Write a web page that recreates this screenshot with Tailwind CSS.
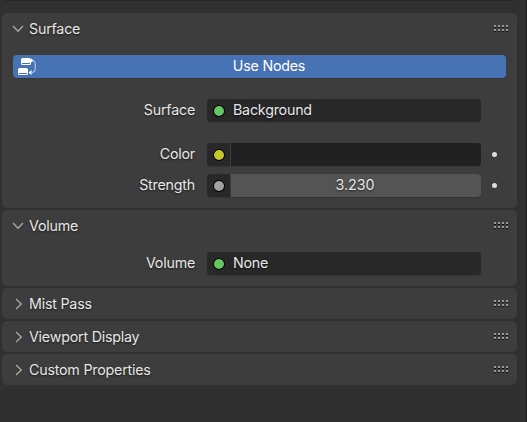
<!DOCTYPE html>
<html lang="en">
<head>
<meta charset="utf-8">
<title>World Properties</title>
<script src="https://cdn.jsdelivr.net/npm/@tailwindcss/browser@4"></script>
</head>
<body class="relative h-[422px] w-[527px] overflow-hidden border-r border-[#1b1b1b] bg-[#303030] font-['Inter',sans-serif] text-[14.25px] leading-[23px] tracking-[-0.21px] text-[#e6e6e6] [text-shadow:0_1px_2px_rgb(0_0_0/0.6)]">
<svg class="hidden">
  <symbol id="down" viewBox="0 0 12 8"><path d="M1 1 L6 6.3 L11 1" fill="none" stroke="#aaa" stroke-width="1.3"/></symbol>
  <symbol id="right" viewBox="0 0 8 12"><path d="M1 1 L6.3 6 L1 11" fill="none" stroke="#aaa" stroke-width="1.3"/></symbol>
  <symbol id="grip" viewBox="0 0 14 7">
    <path d="M0 2.5H2M4 2.5H6M8 2.5H10M12 2.5H14M0 6.5H2M4 6.5H6M8 6.5H10M12 6.5H14" stroke="#111"/>
    <path d="M0 1H2M4 1H6M8 1H10M12 1H14M0 5H2M4 5H6M8 5H10M12 5H14" stroke="#999" stroke-width="2"/>
  </symbol>
</svg>
<div class="ml-[5px] h-px w-[509px] bg-[#252525]"></div>
<main class="flex w-[517px] flex-col gap-[2px] pt-3 pl-[2px]">
  <section class="h-[195px] rounded-[5px] bg-[#3d3d3d]">
    <header class="flex h-[31px] items-center pr-[9px] pl-[10px]">
      <svg class="mr-[5px] h-2 w-3"><use href="#down"/></svg><h2 class="grow">Surface</h2><svg class="h-[7px] w-[14px]"><use href="#grip"/></svg>
    </header>
    <button class="mt-[11px] ml-[11px] flex h-[23px] w-[493px] items-center rounded-[4px] bg-[#4772b3] text-white shadow-[0_1px_0_#353535]">
      <svg class="ml-[5px] h-[17px] w-[18px] shrink-0" viewBox="0 0 18 17"><g fill="#fff"><rect x="3" y="0" width="10" height="7" rx="1.5"/><rect x="0" y="10" width="10" height="7" rx="1.5"/><path d="M13 0.5L16 2.5L13 4.5ZM13.5 12V17L10.5 14.5Z"/></g><path d="M4 5.5H12M1 15.5H9" stroke="#4772b3"/><path d="M14 2.5Q17.2 2.8 17.2 6V11Q17.2 14.2 13.5 14.5" fill="none" stroke="#b5c7e3" stroke-width="1.1"/></svg>
      <span class="h-[25px] grow pr-[2px] text-center leading-[23px] -ml-[2px]">Use Nodes</span>
    </button>
    <div class="mt-[21px] flex h-[23px] leading-[21px]">
      <span class="w-[193px] text-right">Surface</span>
      <div class="ml-3 flex w-[274px] rounded-[4px] bg-[#282828] shadow-[0_1px_0_#353535]"><i class="mt-[7px] ml-[7px] h-[10px] w-[10px] rounded-full bg-[#63c763] ring-1 ring-black"></i><span class="ml-[9px]">Background</span></div>
    </div>
    <div class="mt-[21px] flex h-[23px] leading-[21px]">
      <span class="w-[193px] text-right">Color</span>
      <div class="ml-3 flex h-[23px] w-[274px] rounded-[4px] bg-[#282828] shadow-[0_1px_0_#353535]"><i class="mt-[7px] ml-[7px] h-[10px] w-[10px] rounded-full bg-[#c7c729] ring-1 ring-black"></i><span class="ml-[6px] h-full grow rounded-r-[4px] border-l border-[#3d3d3d] bg-[#212121]"></span></div>
      <i class="mt-[9px] ml-[11px] h-[5px] w-[5px] rounded-full bg-[#dcdcdc]"></i>
    </div>
    <div class="mt-2 flex h-[23px] leading-[21px]">
      <span class="w-[193px] text-right">Strength</span>
      <div class="ml-3 flex h-[23px] w-[274px] rounded-[4px] bg-[#282828] shadow-[0_1px_0_#353535]"><i class="mt-[7px] ml-[7px] h-[10px] w-[10px] rounded-full bg-[#a1a1a1] ring-1 ring-black"></i><span class="ml-[6px] h-full grow rounded-r-[4px] border-l border-[#3d3d3d] bg-[#545454] pr-[2px] text-center tracking-[0px]">3.230</span></div>
      <i class="mt-[9px] ml-[11px] h-[5px] w-[5px] rounded-full bg-[#dcdcdc]"></i>
    </div>
  </section>
  <section class="h-[76px] rounded-[5px] bg-[#3d3d3d]">
    <header class="flex h-[31px] items-center pr-[9px] pl-[10px]">
      <svg class="mr-[5px] h-2 w-3"><use href="#down"/></svg><h2 class="grow">Volume</h2><svg class="h-[7px] w-[14px]"><use href="#grip"/></svg>
    </header>
    <div class="mt-[11px] flex h-[23px] leading-[21px]">
      <span class="w-[193px] text-right">Volume</span>
      <div class="ml-3 flex w-[274px] rounded-[4px] bg-[#282828] shadow-[0_1px_0_#353535]"><i class="mt-[7px] ml-[7px] h-[10px] w-[10px] rounded-full bg-[#63c763] ring-1 ring-black"></i><span class="ml-[9px]">None</span></div>
    </div>
  </section>
  <section class="flex h-[31px] items-center rounded-[5px] bg-[#3d3d3d] pr-[9px] pl-[13px]">
    <svg class="mr-[6px] h-3 w-2"><use href="#right"/></svg><h2 class="grow">Mist Pass</h2><svg class="h-[7px] w-[14px]"><use href="#grip"/></svg>
  </section>
  <section class="flex h-[31px] items-center rounded-[5px] bg-[#3d3d3d] pr-[9px] pl-[13px]">
    <svg class="mr-[6px] h-3 w-2"><use href="#right"/></svg><h2 class="grow">Viewport Display</h2><svg class="h-[7px] w-[14px]"><use href="#grip"/></svg>
  </section>
  <section class="flex h-[31px] items-center rounded-[5px] bg-[#3d3d3d] pr-[9px] pl-[13px]">
    <svg class="mr-[6px] h-3 w-2"><use href="#right"/></svg><h2 class="grow">Custom Properties</h2><svg class="h-[7px] w-[14px]"><use href="#grip"/></svg>
  </section>
</main>
</body>
</html>
